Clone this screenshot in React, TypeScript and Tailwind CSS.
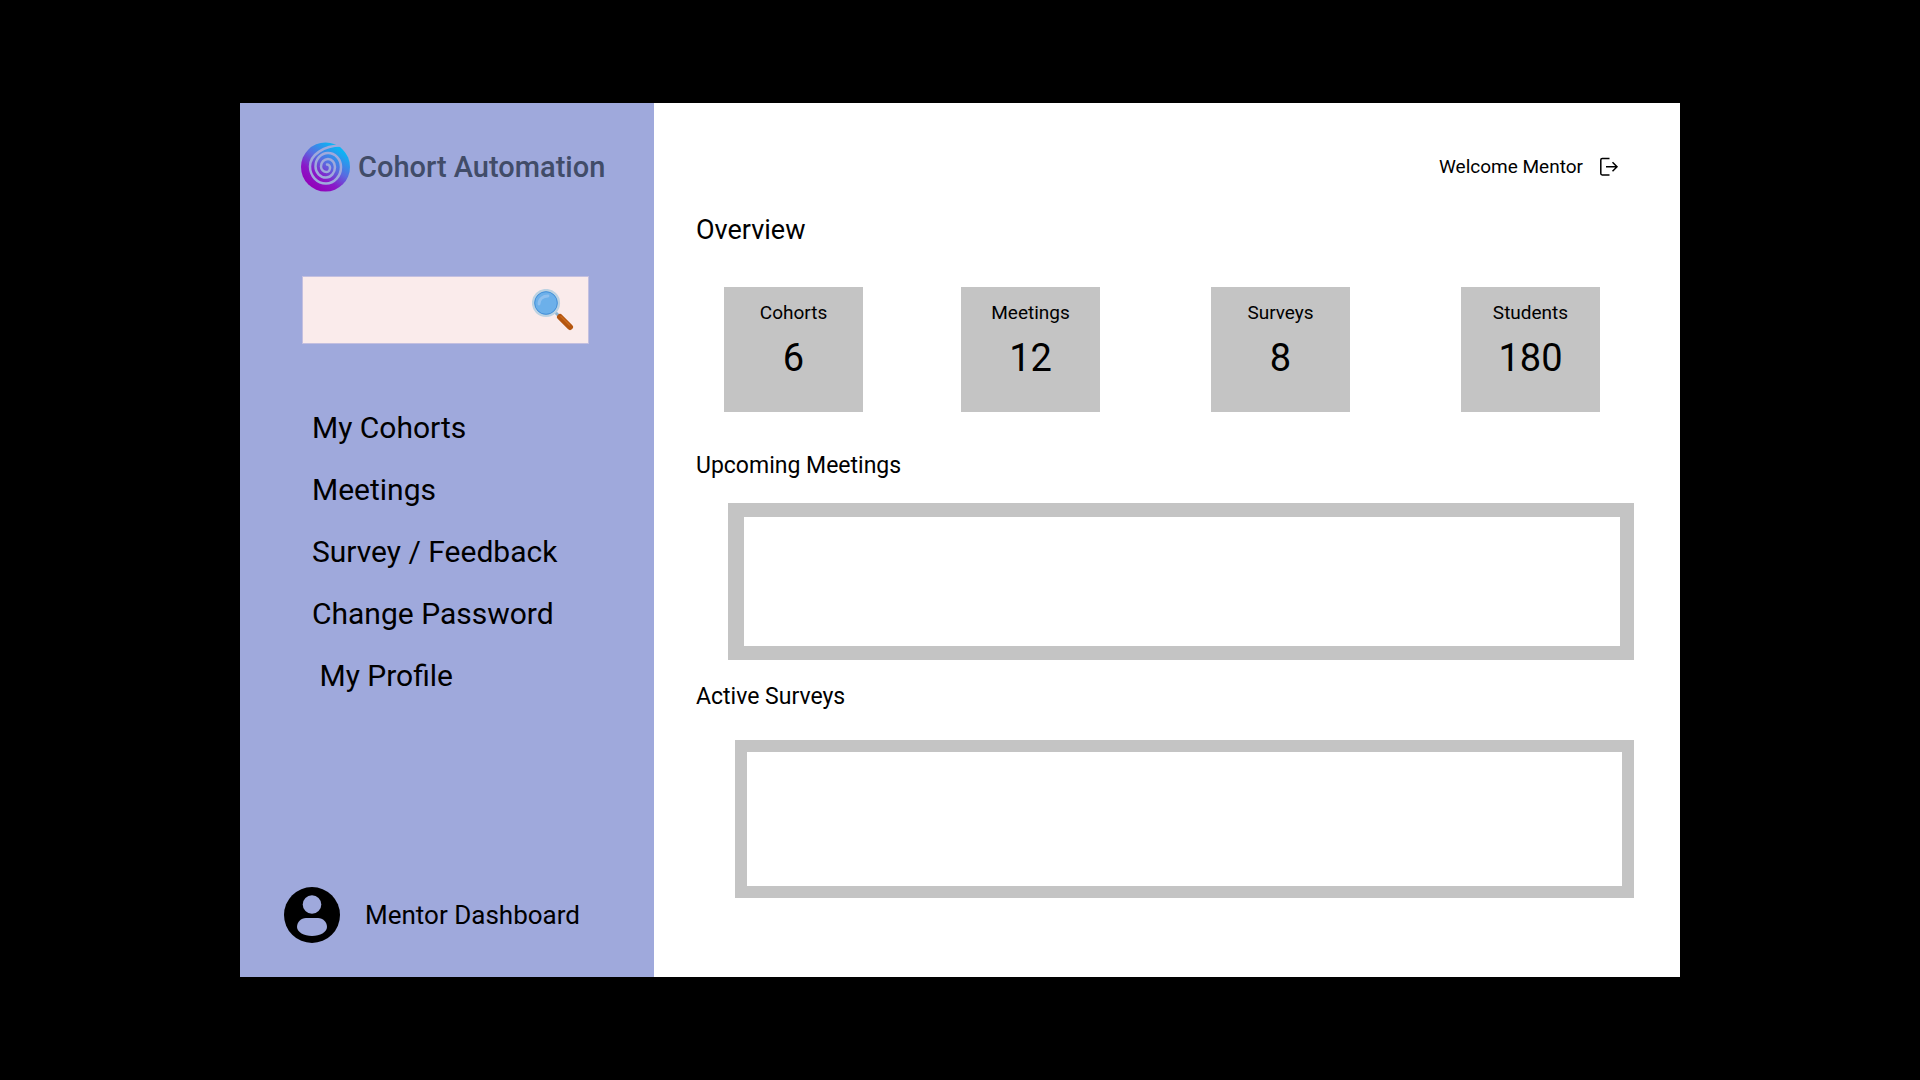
const navItems = ["My Cohorts", "Meetings", "Survey / Feedback", "Change Password", " My Profile"];

const stats = [
  { label: "Cohorts", value: 6 },
  { label: "Meetings", value: 12 },
  { label: "Surveys", value: 8 },
  { label: "Students", value: 180 },
];

function SpiralLogo() {
  return (
    <svg viewBox="0 0 49 50" className="h-[50px] w-[49px] shrink-0" aria-hidden="true">
      <defs>
        <linearGradient id="swirl" x1="0.25" y1="0.95" x2="0.8" y2="0.15">
          <stop offset="0" stopColor="#9400b8" />
          <stop offset="0.3" stopColor="#8a18c8" />
          <stop offset="0.6" stopColor="#5a6ae0" />
          <stop offset="1" stopColor="#0cb4f4" />
        </linearGradient>
      </defs>
      <circle cx="24.500" cy="25" r="24.500" fill="url(#swirl)" />
      <path
        d="M40 3.500A31 21 0 0 0 9 24.500A16 17 0 0 0 25 41.500A15 16.500 0 0 0 40 25A13 14 0 0 0 27 11A12.500 13.500 0 0 0 14.500 24.500A10.500 11 0 0 0 25 35.500A9 10.500 0 0 0 34 25A7 8 0 0 0 27 17A7 7.500 0 0 0 20 24.500A5.500 5.500 0 0 0 25.500 30A3.500 4 0 0 0 29 25.500A3 3 0 0 0 26 22.500"
        fill="none"
        stroke="#9fa9dc"
        strokeWidth="2.500"
        strokeLinecap="round"
      />
    </svg>
  );
}

function MagnifierIcon() {
  return (
    <svg viewBox="0 0 42 42" className="h-[42px] w-[42px]" aria-hidden="true">
      <path d="M22 22l5 5" stroke="#8fb3cf" strokeWidth="3" />
      <path d="M28 28l10 10" stroke="#b4550f" strokeWidth="6" strokeLinecap="round" />
      <path d="M29 27.500l8.500 8.500" stroke="#c96a1c" strokeWidth="1.500" strokeLinecap="round" />
      <circle cx="14" cy="14" r="12.800" fill="#6cb0ea" stroke="#bcd2e2" strokeWidth="2.600" />
      <circle cx="14" cy="14" r="11.300" fill="none" stroke="#4590d8" strokeWidth="1" />
      <path d="M7 15c0-5 4-8 9-8" fill="none" stroke="#8fc0ef" strokeWidth="2.800" strokeLinecap="round" />
    </svg>
  );
}

function AccountIcon() {
  return (
    <svg viewBox="0 0 56 56" className="size-14 shrink-0" aria-hidden="true">
      <circle cx="28" cy="28" r="28" fill="#000" />
      <circle cx="28" cy="17.500" r="9.300" fill="#9fa9dc" />
      <path d="M13 40C13 35 17 31 22 31H34C39 31 43 35 43 40C43 45 36 49 28 49S13 45 13 40Z" fill="#9fa9dc" />
    </svg>
  );
}

function LogoutIcon() {
  return (
    <svg viewBox="0 0 20 20" className="size-5" fill="none" stroke="#000" strokeWidth="1.500" aria-hidden="true">
      <path d="M10.500 1.500H3.200Q1.800 1.500 1.800 2.900V16.600Q1.800 18 3.200 18H10.500" />
      <path d="M7 9.700H18M13.500 5.200L18 9.700L13.500 14.200" />
    </svg>
  );
}

function Sidebar() {
  return (
    <aside className="flex w-[414px] shrink-0 flex-col bg-[#9fa9dc]">
      <a href="#" className="ml-[61px] mt-[38px] flex items-center gap-2">
        <SpiralLogo />
        <span className="whitespace-nowrap text-[29px] font-medium leading-[52px] text-[#414c68]">
          Cohort Automation
        </span>
      </a>

      <form role="search" className="ml-[62px] mr-[65px] mt-[83px] flex h-[68px] items-center border border-[#c3bfe0] bg-[#faebeb]">
        <input type="search" aria-label="Search" className="h-full min-w-0 flex-1 bg-transparent px-4 text-2xl outline-none" />
        <button type="button" aria-label="Search" className="mr-3.5">
          <MagnifierIcon />
        </button>
      </form>

      <nav aria-label="Main" className="ml-[72px] mt-[66px]">
        <ul className="flex flex-col gap-[26px]">
          {navItems.map((item) => (
            <li key={item} className="text-[30px] leading-9">
              <a href="#" className="whitespace-pre">{item}</a>
            </li>
          ))}
        </ul>
      </nav>

      <div className="mb-[34px] ml-11 mt-auto flex items-center gap-[25px]">
        <AccountIcon />
        <span className="text-[26px] leading-8">Mentor Dashboard</span>
      </div>
    </aside>
  );
}

export default function App() {
  return (
    <div className="flex min-h-screen items-center justify-center bg-black px-[12.5%] font-[Roboto,sans-serif] text-black">
      <div className="flex min-h-[874px] w-full">
        <Sidebar />
        <main className="min-w-0 flex-1 bg-white pb-[76px] pl-[42px] pr-[46px]">
          <header className="mr-[15px] mt-[53px] flex items-center justify-end gap-4">
            <span className="text-[19px] leading-[22px]">Welcome Mentor</span>
            <button type="button" aria-label="Log out">
              <LogoutIcon />
            </button>
          </header>

          <h1 className="mt-9 text-[27px] leading-8">Overview</h1>
          <dl className="ml-7 mr-[34px] mt-[41px] grid grid-cols-[237fr_250fr_250fr_139px]">
            {stats.map(({ label, value }) => (
              <div key={label} className="h-[125px] w-[139px] bg-[#c4c4c4] pt-4 text-center">
                <dt className="text-[19px] leading-5">{label}</dt>
                <dd className="mt-3 text-[38px] leading-[46px]">{value}</dd>
              </div>
            ))}
          </dl>

          <h2 className="mt-10 text-[23px] leading-7">Upcoming Meetings</h2>
          <section aria-label="Upcoming Meetings" className="ml-8 mt-[23px] h-[157px] border-y-[14px] border-l-[16px] border-r-[14px] border-[#c4c4c4]" />

          <h2 className="mt-[23px] text-[23px] leading-7">Active Surveys</h2>
          <section aria-label="Active Surveys" className="ml-[39px] mt-[29px] h-[158px] border-[12px] border-[#c4c4c4]" />
        </main>
      </div>
    </div>
  );
}
